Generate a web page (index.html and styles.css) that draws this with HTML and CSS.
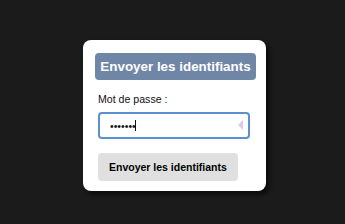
FILE: index.html
```html
<!DOCTYPE html>
<html lang="fr">
<head>
  <meta charset="UTF-8">
  <meta name="viewport" content="width=device-width, initial-scale=1.0">
  <title>Envoyer les identifiants</title>
  <link rel="stylesheet" href="styles.css">
</head>
<body>
  <div class="card">
    <h1 class="card-title">Envoyer les identifiants</h1>
    <form class="login-form" onsubmit="return false">
      <label class="label" for="pwd">Mot de passe :</label>
      <div class="field">
        <input class="input" id="pwd" type="password" value="1234567">
        <span class="caret"></span>
        <span class="reveal"></span>
      </div>
      <button class="btn" type="submit">Envoyer les identifiants</button>
    </form>
  </div>
</body>
</html>
```

FILE: styles.css
```css
body {
  margin: 0;
  height: 224px;
  background: #1b1b1b;
  font-family: "Liberation Sans", Arial, sans-serif;
  display: flex;
  justify-content: center;
  align-items: flex-start;
}
.card {
  margin-top: 40px;
  margin-left: 4px;
  width: 161px;
  padding: 13px 10px 10px 12px;
  background: #fff;
  border-radius: 8px;
  box-shadow: 3px 3px 5px rgba(0,0,0,0.7);
}
.card-title {
  margin: 0;
  height: 27px;
  line-height: 27px;
  background: #6f86a7;
  color: #fff;
  border-radius: 4px;
  font-size: 13.4px;
  font-weight: bold;
  text-align: center;
}
.login-form {
  display: flex;
  flex-direction: column;
  align-items: flex-start;
  padding: 0 0 0 3px;
}
.label {
  margin-top: 13px;
  font-size: 10.6px;
  line-height: 12px;
  color: #111;
}
.field {
  position: relative;
  margin-top: 7px;
}
.input {
  box-sizing: border-box;
  width: 152px;
  height: 27px;
  padding: 0 0 0 10px;
  border: 2px solid #5b8fd0;
  border-radius: 4px;
  font-family: "Liberation Sans", Arial, sans-serif;
  font-size: 10.5px;
  color: #111;
  outline: none;
}
.caret {
  position: absolute;
  left: 37px;
  top: 8px;
  width: 1px;
  height: 11px;
  background: #111;
}
.reveal {
  position: absolute;
  right: 7px;
  top: 8px;
  width: 0;
  height: 0;
  border-top: 5px solid transparent;
  border-bottom: 5px solid transparent;
  border-right: 5px solid #d9ccef;
}
.btn {
  margin-top: 14px;
  height: 28px;
  padding: 0 11px;
  background: #e0e0e0;
  color: #000;
  border: none;
  border-radius: 4px;
  font-family: "Liberation Sans", Arial, sans-serif;
  font-size: 10.5px;
  font-weight: bold;
  cursor: pointer;
}
```
